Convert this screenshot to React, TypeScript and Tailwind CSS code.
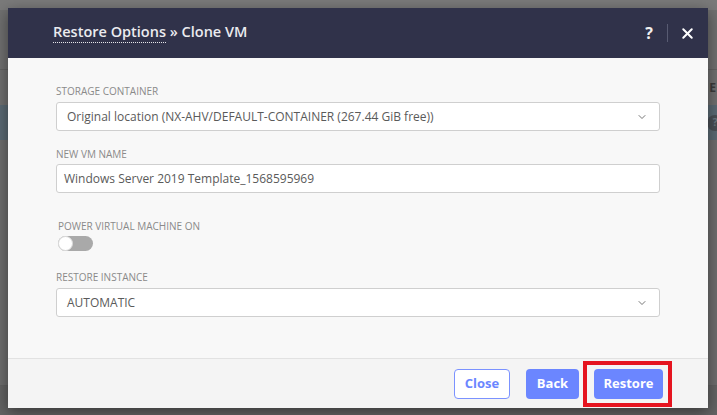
import { ChevronDown, X } from "lucide-react";

const Label = ({ text, className = "" }: { text: string; className?: string }) => (
  <div className={"text-[10px] leading-[14px] uppercase text-[#8a8a8a] " + className}>{text}</div>
);

const SelectBox = ({ value }: { value: string }) => (
  <div className="flex h-[29px] items-center justify-between rounded-[3px] border border-[#cfcfcf] bg-white pl-[10px] pr-[11px] text-[12px] text-[#5a5a5a]">
    <span>{value}</span>
    <ChevronDown size={12} strokeWidth={1.8} className="text-[#666]" />
  </div>
);

const BackgroundPage = () => (
  <div className="flex h-full flex-col">
    <div className="h-[10px] bg-[#7a7a7a]" />
    <div className="h-[60px] border-b border-[#636363] bg-[#707070]" />
    <div className="flex h-[35px] items-center justify-end bg-[#707070] pr-[1px] text-[12px] font-bold text-[#3c3c3c]">
      <span>E</span>
    </div>
    <div className="flex h-[35px] items-center justify-end bg-[#5b6a74]">
      <div className="mr-[-6px] flex h-[16px] w-[16px] items-center justify-center rounded-full bg-[#4a4f55] text-[11px] font-bold text-[#6a7780]">?</div>
    </div>
    <div className="h-[246px] border-b border-[#626262] bg-[#6e6e6e]" />
    <div className="flex-1 bg-[#646464]" />
  </div>
);

const App = () => {
  return (
    <div className="relative h-[415px] w-[717px] overflow-hidden bg-[#6e6e6e] font-['Open_Sans',sans-serif]">
      <BackgroundPage />

      <div className="absolute left-[8px] top-[8px] flex h-[400px] w-[700px] flex-col shadow-[0_4px_14px_rgba(0,0,0,0.45)]">
        {/* header */}
        <div className="flex h-[50px] items-center bg-[#30324a] pl-[45px] pr-[12px]">
          <div className="pb-[2px] text-[14.5px] font-semibold text-[#ebebef]">
            <span className="border-b border-dotted border-[#e6e6ea] pb-[1px]">Restore Options</span> » Clone VM
          </div>
          <div className="ml-auto flex items-center">
            <span className="text-[16px] font-bold text-[#f0f0f0]">?</span>
            <div className="ml-[14px] mr-[11px] h-[18px] w-px bg-[#585b72]" />
            <X size={17} strokeWidth={2.8} className="text-white" />
          </div>
        </div>

        {/* body */}
        <div className="flex-1 bg-[#f8f8f8] px-[48px] pt-[26px]">
          <Label text="Storage Container" className="mb-[4px]" />
          <SelectBox value="Original location (NX-AHV/DEFAULT-CONTAINER (267.44 GiB free))" />

          <Label text="New VM Name" className="mb-[3px] mt-[16px]" />
          <div className="flex h-[29px] items-center rounded-[3px] border border-[#cfcfcf] bg-white pl-[7px] text-[12px] text-[#5a5a5a]">
            Windows Server 2019 Template_1568595969
          </div>

          <Label text="Power Virtual Machine On" className="ml-[2px] mt-[26px]" />
          <div className="ml-[2px] mt-[3px] flex h-[15px] w-[35px] items-center rounded-full bg-[#a9a9a9]">
            <div className="h-[15px] w-[15px] rounded-full border border-[#dcdcdc] bg-white" />
          </div>

          <Label text="Restore Instance" className="mb-[4px] mt-[19px]" />
          <SelectBox value="AUTOMATIC" />
        </div>

        {/* footer */}
        <div className="flex h-[50px] items-center justify-end border-t border-[#e2e2e2] bg-[#f4f4f4] pr-[45px] text-[13px] font-bold">
          <button className="h-[30px] w-[56px] rounded-[4px] border border-[#7b92ff] bg-white text-[#6b86ff]">Close</button>
          <button className="ml-[16px] h-[30px] w-[53px] rounded-[4px] bg-[#6b86ff] text-white">Back</button>
          <button className="ml-[15px] h-[30px] w-[69px] rounded-[4px] bg-[#6b86ff] text-white">Restore</button>
        </div>
      </div>

      {/* annotation highlight */}
      <div className="absolute left-[583px] top-[361px] h-[46px] w-[89px] border-[4px] border-[#e5141f]" />
    </div>
  );
};

export default App;
